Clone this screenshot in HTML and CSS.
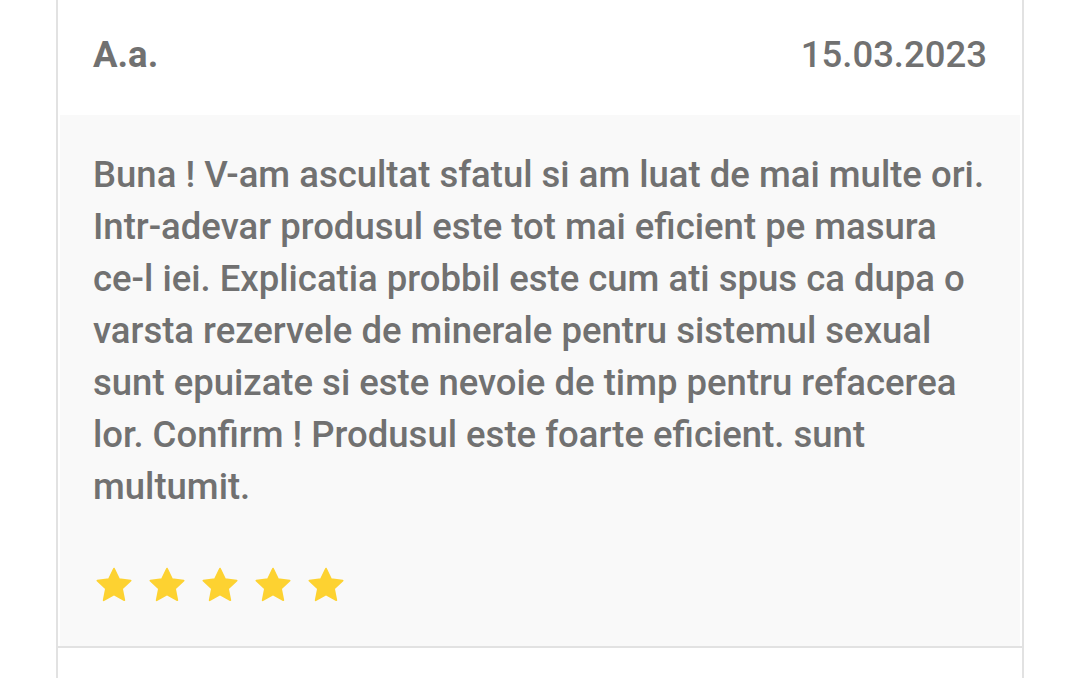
FILE: index.html
```html
<!DOCTYPE html>
<html lang="ro">

<head>
  <meta charset="UTF-8">
  <title>Recenzii</title>
  <link rel="stylesheet" href="styles.css">
</head>

<body>

  <div class="recenzii">
    <div class="recenzie">
      <div class="recenzie-cap">
        <span class="autor">A.a.</span>
        <span class="data">15.03.2023</span>
      </div>
      <div class="recenzie-corp">
        <p class="text">Buna ! <span class="nowrap">V-am</span> ascultat sfatul si am luat de mai multe ori. <span class="nowrap">Intr-adevar</span> produsul este tot mai eficient pe masura <span class="nowrap">ce-l</span> iei. Explicatia probbil este cum ati spus ca dupa o varsta rezervele de minerale pentru sistemul sexual sunt epuizate si este nevoie de timp pentru refacerea lor. Confirm ! Produsul este foarte eficient. sunt multumit.</p>
        <div class="stele">
          <svg viewBox="0 0 24 24"><path d="M12 2.6l2.9 6.1 6.6.8-4.9 4.6 1.3 6.6L12 17.4l-5.9 3.3 1.3-6.6-4.9-4.6 6.6-.8z" stroke-linejoin="round"/></svg>
          <svg viewBox="0 0 24 24"><path d="M12 2.6l2.9 6.1 6.6.8-4.9 4.6 1.3 6.6L12 17.4l-5.9 3.3 1.3-6.6-4.9-4.6 6.6-.8z" stroke-linejoin="round"/></svg>
          <svg viewBox="0 0 24 24"><path d="M12 2.6l2.9 6.1 6.6.8-4.9 4.6 1.3 6.6L12 17.4l-5.9 3.3 1.3-6.6-4.9-4.6 6.6-.8z" stroke-linejoin="round"/></svg>
          <svg viewBox="0 0 24 24"><path d="M12 2.6l2.9 6.1 6.6.8-4.9 4.6 1.3 6.6L12 17.4l-5.9 3.3 1.3-6.6-4.9-4.6 6.6-.8z" stroke-linejoin="round"/></svg>
          <svg viewBox="0 0 24 24"><path d="M12 2.6l2.9 6.1 6.6.8-4.9 4.6 1.3 6.6L12 17.4l-5.9 3.3 1.3-6.6-4.9-4.6 6.6-.8z" stroke-linejoin="round"/></svg>
        </div>
      </div>
    </div>
    <div class="recenzie-urm"></div>
  </div>

</body>

</html>
```

FILE: styles.css
```css
body {
  margin: 0;
  background: #fff;
  font-family: Roboto, "Liberation Sans", sans-serif;
  color: #717171;
}

.recenzii {
  width: 964px;
  margin-left: 56px;
  border-left: 2px solid #e2e2e2;
  border-right: 2px solid #e2e2e2;
  height: 678px;
  overflow: hidden;
}

.recenzie {
  border-bottom: 2px solid #e2e2e2;
}

.recenzie-cap {
  height: 115px;
  padding: 0 35px;
  display: flex;
  justify-content: space-between;
  align-items: center;
  font-size: 36.5px;
}

.autor {
  font-weight: 700;
  margin-top: -6px;
}

.data {
  font-weight: 500;
  margin-top: -6px;
}

.recenzie-corp {
  background: #f9f9f9;
  margin: 0 2px;
  padding: 34px 33px 40px;
}

.text {
  margin: 0;
  font-size: 36.5px;
  font-weight: 500;
  line-height: 52px;
}

.nowrap {
  white-space: nowrap;
}

.stele {
  display: flex;
  gap: 11px;
  margin-top: 51px;
}

.stele svg {
  width: 42px;
  height: 42px;
  fill: #fdd231;
  stroke: #fdd231;
  stroke-width: 1;
}
```
